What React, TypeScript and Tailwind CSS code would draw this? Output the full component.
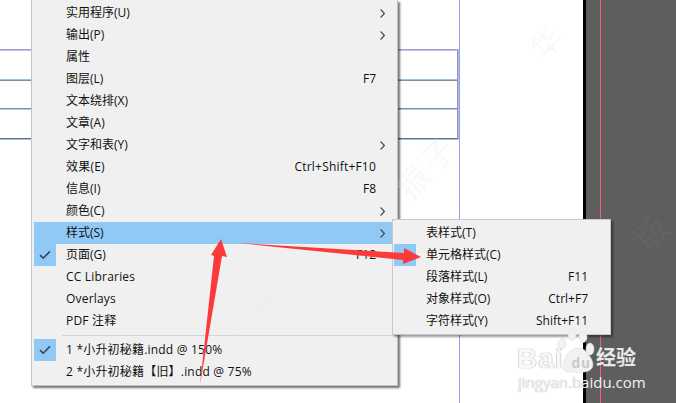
import React from "react";

type Item = { label?: string; shortcut?: string; arrow?: boolean; check?: boolean; active?: boolean; sep?: boolean; wide?: boolean };

const mainItems: Item[] = [
  { label: "实用程序(U)", arrow: true },
  { label: "输出(P)", arrow: true },
  { label: "属性" },
  { label: "图层(L)", shortcut: "F7" },
  { label: "文本绕排(X)" },
  { label: "文章(A)" },
  { label: "文字和表(Y)", arrow: true },
  { label: "效果(E)", shortcut: "Ctrl+Shift+F10", wide: true },
  { label: "信息(I)", shortcut: "F8" },
  { label: "颜色(C)", arrow: true },
  { label: "样式(S)", arrow: true, active: true },
  { label: "页面(G)", shortcut: "F12", check: true },
  { label: "CC Libraries", wide: true },
  { label: "Overlays", wide: true },
  { label: "PDF 注释", wide: true },
  { sep: true },
  { label: "1 *小升初秘籍.indd @ 150%", check: true, wide: true },
  { label: "2 *小升初秘籍【旧】.indd @ 75%", wide: true },
];

const subItems: Item[] = [
  { label: "表样式(T)" },
  { label: "单元格样式(C)", check: true },
  { label: "段落样式(L)", shortcut: "F11" },
  { label: "对象样式(O)", shortcut: "Ctrl+F7" },
  { label: "字符样式(Y)", shortcut: "Shift+F11" },
];

function Row({ item }: { item: Item }) {
  return (
    <div className={`flex h-[22px] items-center ${item.active ? "bg-[#90c8f6]" : ""} ${item.wide ? "tracking-[0.2px]" : ""}`}>
      <div className={`flex h-[22px] w-[22px] shrink-0 items-center justify-center ${item.check ? "bg-[#90c8f6]" : ""}`}>
        {item.check && (
          <svg width="12" height="10" viewBox="0 0 12 10" fill="none" stroke="#3c4650" strokeWidth="1.6">
            <path d="M1 5.2 L4.2 8.2 L11 1.4" />
          </svg>
        )}
      </div>
      <span className="ml-[10px] whitespace-nowrap">{item.label}</span>
      {item.shortcut && <span className="ml-auto whitespace-nowrap">{item.shortcut}</span>}
      <div className={`flex w-[16px] shrink-0 items-center justify-end pr-[7px] ${item.shortcut ? "" : "ml-auto"}`}>
        {item.arrow && (
          <svg width="5" height="9" viewBox="0 0 5 9" fill="none" stroke="#444" strokeWidth="1.1">
            <path d="M0.6 0.5 L4.4 4.5 L0.6 8.5" />
          </svg>
        )}
      </div>
    </div>
  );
}

export default function App() {
  return (
    <div className="relative flex h-[403px] w-[676px] overflow-hidden bg-white font-['Open_Sans','Noto_Sans_CJK_SC',sans-serif] text-[12px] text-[#111]">
      {/* document page */}
      <div className="h-full w-[583px] shrink-0 bg-white">
        <div className="h-full w-[460px] border-r border-[#9a9af0] pt-[49px]">
          <div className="border-y border-t-[#c88cc8] border-b-[#9cc4f0] border-r border-r-[#9cc4f0]">
            <div className="h-[30px] border-y border-r border-t-[#a4ccf4] border-b-[#9cc0e6] border-r-[#969696]" />
            <div className="h-[29px] border-y border-r border-t-[#8c8c8c] border-b-[#8c8c8c] border-r-[#969696]" />
            <div className="h-[30px] border-y border-r border-t-[#a4ccf4] border-b-[#6e6e6e] border-r-[#969696]" />
          </div>
        </div>
      </div>
      <div className="h-full w-[3px] shrink-0 bg-black" />
      <div className="h-full flex-1 bg-[#5e5e5e] pl-[14px]">
        <div className="h-full w-px bg-[#ff5a70]" />
      </div>

      {/* main menu */}
      <div className="absolute left-[31px] top-0 w-[367px] border-x border-b border-[#c4c4c4] bg-[#f0f0f0] pl-[2px] pr-[5px] py-[2px] shadow-[2px_2px_2px_rgba(0,0,0,0.55)]">
        {mainItems.map((it, i) =>
          it.sep ? (
            <div key={i} className="ml-[28px] mr-[-5px] flex h-[7px] items-center">
              <div className="h-px w-full bg-[#d4d4d4]" />
            </div>
          ) : (
            <Row key={i} item={it} />
          )
        )}
      </div>

      {/* submenu */}
      <div className="absolute left-[392px] top-[219px] w-[219px] border border-[#c8c8c8] bg-[#f0f0f0] pl-[1px] pr-[6px] py-[2px] shadow-[2px_2px_2px_rgba(0,0,0,0.4)]">
        {subItems.map((it, i) => (
          <Row key={i} item={it} />
        ))}
      </div>

      {/* faint watermark fragments */}
      <div className="pointer-events-none absolute left-[232px] top-[318px] origin-left -rotate-[45deg] whitespace-nowrap text-[32px] tracking-[6px] text-[#d4e8e8]/15">
        华版
      </div>
      <div className="pointer-events-none absolute left-[402px] top-[170px] origin-left -rotate-[48deg] whitespace-nowrap text-[32px] tracking-[6px] text-[#d4e8e8]/20">
        振子
      </div>
      <div className="pointer-events-none absolute left-[535px] top-[30px] origin-left -rotate-[45deg] whitespace-nowrap text-[32px] text-[#d4e8e8]/20">
        华
      </div>
      <div className="pointer-events-none absolute left-[640px] top-[220px] origin-left -rotate-[45deg] whitespace-nowrap text-[32px] text-[#8a9a9a]/10">
        版
      </div>

      {/* red annotation arrows and Baidu paw */}
      <svg className="pointer-events-none absolute left-0 top-0" width="676" height="403" viewBox="0 0 676 403">
        <path d="M200 385 L214 256 L211 255 L221 239 L227 257 L222 256 Z" fill="#fd3a3a" />
        <path d="M238 243 L404 253 L404 248 L421 257 L403 264 L403 260 Z" fill="#fd3a3a" />
        <g fill="#f2f2f2" stroke="#dcdcdc" strokeWidth="0.6">
          <ellipse cx="562" cy="344" rx="4" ry="5" />
          <ellipse cx="572" cy="335" rx="4" ry="5.5" />
          <ellipse cx="583" cy="337" rx="4" ry="5.5" />
          <ellipse cx="590" cy="349" rx="4" ry="6" />
          <path d="M566 358 C570 346 583 345 588 354 C593 360 596 368 588 371 C580 374 574 371 568 372 C561 371 562 363 566 358 Z" />
        </g>
      </svg>

      {/* Baidu logo text */}
      <div className="pointer-events-none absolute left-[517px] top-[343px] font-['Liberation_Sans',sans-serif] text-[28px] font-bold leading-[32px] tracking-[1px] text-[#f8f8f8] [text-shadow:0_0_1px_rgba(110,110,110,0.9)]">
        Bai<span className="ml-[8px] text-[14px] text-[#c8c8c8] [text-shadow:none]">du</span>
      </div>
      <div className="pointer-events-none absolute left-[596px] top-[344px] text-[20px] font-bold leading-[28px] text-[#e8e8e8]">
        经验
      </div>
      <div className="pointer-events-none absolute left-[518px] top-[373px] text-[15px] leading-[18px] text-[#f0f0f0] [text-shadow:0_0_1px_rgba(110,110,110,0.6)]">
        jingyan.baidu.com
      </div>
    </div>
  );
}
